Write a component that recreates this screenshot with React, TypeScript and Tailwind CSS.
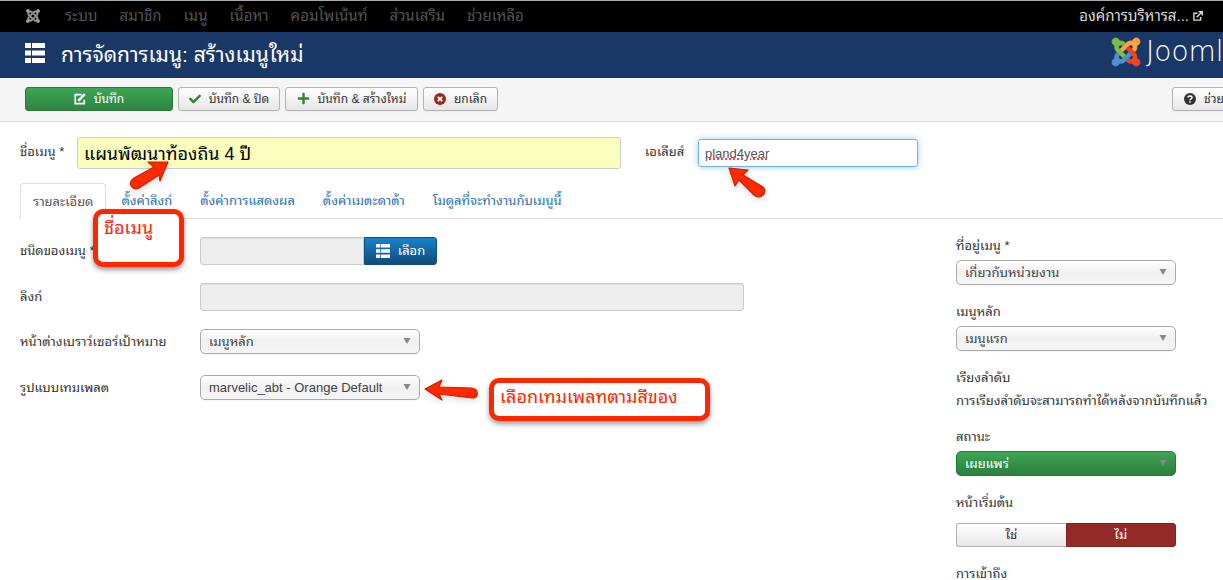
import React from "react";
import { FaCheck, FaPlus, FaJoomla } from "react-icons/fa";

const topMenu = ["ระบบ", "สมาชิก", "เมนู", "เนื้อหา", "คอมโพเน้นท์", "ส่วนเสริม", "ช่วยเหลือ"];
const tabs = ["รายละเอียด", "ตั้งค่าลิงก์", "ตั้งค่าการแสดงผล", "ตั้งค่าเมตะดาต้า", "โมดูลที่จะทำงานกับเมนูนี้"];

const plainButton =
  "flex h-6 shrink-0 items-center whitespace-nowrap rounded-[3px] border border-[#b3b3b3] bg-linear-to-b from-white to-[#e6e6e6] text-xs text-[#333] shadow-xs";
const fieldLabel = "text-[13px] leading-[18px] text-[#333]";
const disabledField =
  "h-7 min-w-0 border border-[#ccc] bg-[#eee] px-2 text-[13px] text-[#555] shadow-[inset_0_1px_1px_rgba(0,0,0,0.075)]";

function JoomlaMark() {
  return (
    <svg viewBox="0 32 448 448" className="size-7 shrink-0 overflow-visible" aria-hidden="true">
      <g strokeWidth="12" strokeLinejoin="round">
        <path fill="#7ac143" stroke="#7ac143" d="M.6 92.1C.6 58.8 27.4 32 60.4 32c30 0 54.5 21.9 59.2 50.2 32.6-7.6 67.1.6 96.5 30l-44.3 44.3c-20.5-20.5-42.6-16.3-55.4-3.5-14.3 14.3-14.3 37.9 0 52.2l99.5 99.5-44 44.3c-87.7-87.2-49.7-49.7-99.8-99.7-26.8-26.5-35-64.8-24.8-98.9C20.4 144.6.6 120.7.6 92.1z" />
        <path fill="#f9a541" stroke="#f9a541" d="M130.1 208.5l44.3 44.3c10-10 89.7-89.7 99.7-99.8 14.3-14.3 37.6-14.3 51.9 0 12.8 12.8 17 35-3.5 55.4l44 44.3c31.2-31.2 38.5-67.6 28.9-101.2 29.2-4.1 51.9-29.2 51.9-59.5 0-33.2-26.8-60.1-59.8-60.1-30.3 0-55.4 22.5-59.5 51.6-33.8-9.9-71.7-1.5-98.3 25.1-18.3 19.1-71.1 71.5-99.6 99.9z" />
        <path fill="#f44321" stroke="#f44321" d="M396.4 360.7c8.2-32.7-.9-68.5-26.3-93.9-11.8-12.2 5 4.7-99.5-99.7l-44.3 44.3 99.7 99.7c14.3 14.3 14.3 37.6 0 51.9-12.8 12.8-35 17-55.4-3.5l-44 44.3c27.6 30.2 68 38.8 102.7 28 5.5 27.4 29.7 48.1 58.9 48.1 33 0 59.8-26.8 59.8-60.1 0-30.2-22.5-55-51.6-59.1z" />
        <path fill="#5091cd" stroke="#5091cd" d="M312.1 307.6l-44-44.3c-87 86.4-50.4 50.4-99.7 99.8-14.3 14.3-37.6 14.3-51.9 0-13.1-13.4-16.9-35.3 3.2-55.4l-44-44.3c-30.2 30.2-38 65.2-29.5 98.3-26.7 6-46.2 29.9-46.2 58.2C0 453.2 26.8 480 59.8 480c28.6 0 52.5-19.8 58.6-46.7 32.7 8.2 68.5-.6 94.2-26 32.1-32 12.2-12.4 99.5-99.7z" />
        <path fill="#7ac143" d="M116 205l99.5 99.5-44 44.3-99.5-99.5z" />
      </g>
    </svg>
  );
}

function ListIcon({ className }: { className: string }) {
  return (
    <svg viewBox="0 0 20 20" className={className} fill="currentColor" aria-hidden="true">
      <path d="M0 0h6v5H0zM7 0h13v5H7zM0 7.5h6v5H0zM7 7.5h13v5H7zM0 15h6v5H0zM7 15h13v5H7z" />
    </svg>
  );
}

function EditIcon() {
  return (
    <svg viewBox="0 0 14 14" className="size-3" fill="none" stroke="currentColor" strokeWidth="2" aria-hidden="true">
      <path d="M9 2H1.5v10.5H12V8" />
      <path d="M5 9.2 12.6 1.4" strokeWidth="2.8" />
    </svg>
  );
}

function ExternalIcon() {
  return (
    <svg viewBox="0 0 10 10" className="size-[10px]" fill="none" stroke="currentColor" strokeWidth="1.4" aria-hidden="true">
      <path d="M4.5 2.2H.9v6.9h6.7V6" />
      <path d="M3.6 6.2 8.5 1.5M5.6.8h3.7v3.6" />
    </svg>
  );
}

function CancelIcon() {
  return (
    <svg viewBox="0 0 12 12" className="size-3" aria-hidden="true">
      <circle cx="6" cy="6" r="6" fill="#9d261d" />
      <path d="m3.8 3.8 4.4 4.4m0-4.4L3.8 8.2" stroke="#fff" strokeWidth="1.9" />
    </svg>
  );
}

function HelpIcon() {
  return (
    <svg viewBox="0 0 12 12" className="size-3" aria-hidden="true">
      <circle cx="6" cy="6" r="6" fill="#333" />
      <path d="M4 4.6C4 2.4 8 2.4 8 4.6 8 6 6 5.7 6 7.3M6 8.3v1.4" fill="none" stroke="#fff" strokeWidth="1.5" />
    </svg>
  );
}

function Choice({ id, value, green = false }: { id: string; value: string; green?: boolean }) {
  const tone = green
    ? "border-[#2b7a3c] bg-linear-to-b from-[#3ea554] to-[#2d7f3e] text-white"
    : "border-[#aaa] bg-linear-to-b from-white via-[#f0f0f0] to-[#f6f6f6] text-[#444]";
  return (
    <div className="relative w-[220px]">
      <select
        id={id}
        className={`block h-[25px] w-full appearance-none rounded-[5px] border pl-2 pr-6 text-[13px] shadow-xs ${tone}`}
      >
        <option>{value}</option>
      </select>
      <svg viewBox="0 0 8 6" className="pointer-events-none absolute right-[9px] top-[9px] h-[6px] w-2" aria-hidden="true">
        <path d="M.5 0h7L4 6z" fill="#888" />
      </svg>
    </div>
  );
}

function Arrow({ className, d, box }: { className: string; d: string; box: string }) {
  return (
    <svg viewBox={box} className={`pointer-events-none absolute z-10 overflow-visible drop-shadow-md ${className}`} aria-hidden="true">
      <path d={d} fill="#ff2a00" stroke="#d31c00" strokeWidth="1.2" strokeLinejoin="round" />
    </svg>
  );
}

const callout =
  "pointer-events-none absolute z-10 rounded-[10px] border-5 border-[#ff2600] bg-white px-[6px] text-[18px] leading-7 text-[#ff2600] shadow-[0_3px_5px_rgba(0,0,0,0.4)]";

export default function App() {
  return (
    <div className="overflow-x-hidden bg-white font-['Liberation_Sans','Thonburi','Noto_Sans_Thai_Looped','Loma','Garuda','Waree','Noto_Sans_Thai','Noto_Sans',sans-serif] text-[13px] leading-[18px] text-[#333]">
      <nav className="flex h-8 items-center border-t border-[#aaa] bg-black pb-px pl-[25px] pr-5 text-[15px] text-[#555]">
        <FaJoomla className="mr-6 size-4 text-[#999]" aria-label="Joomla" />
        <div className="flex gap-[22px]">
          {topMenu.map((item) => (
            <a key={item} href="#" className="whitespace-nowrap">{item}</a>
          ))}
        </div>
        <a href="#" className="ml-auto flex items-center gap-1 whitespace-nowrap text-[#d9d9d9]">
          องค์การบริหารส... <ExternalIcon />
        </a>
      </nav>

      <header className="flex h-[46px] items-center bg-[#1a3867] pl-[25px] text-white">
        <ListIcon className="mb-1 size-5" />
        <h1 className="ml-4 whitespace-nowrap text-[21px]">การจัดการเมนู: สร้างเมนูใหม่</h1>
        <div className="ml-auto flex w-[111px] items-center gap-[6px] pb-[6px]">
          <JoomlaMark />
          <span className="whitespace-nowrap font-['DejaVu_Sans'] text-[28px] font-extralight leading-7">Joomla!</span>
        </div>
      </header>

      <div className="flex h-11 items-center gap-[5px] border-b border-[#ddd] bg-[#f5f5f5] pb-[2px] pl-[25px]">
        <button className="flex h-6 w-[148px] items-center justify-center gap-2 rounded-[3px] border border-[#2b7a3c] bg-linear-to-b from-[#3ea554] to-[#2d8540] text-xs text-white">
          <EditIcon /> บันทึก
        </button>
        <button className={`${plainButton} w-[102px] justify-center gap-2`}>
          <FaCheck className="size-3 text-[#378137]" /> บันทึก &amp; ปิด
        </button>
        <button className={`${plainButton} w-[133px] justify-center gap-2`}>
          <FaPlus className="size-[13px] text-[#378137]" /> บันทึก &amp; สร้างใหม่
        </button>
        <button className={`${plainButton} w-[75px] justify-center gap-2`}>
          <CancelIcon /> ยกเลิก
        </button>
        <div className="ml-auto w-[51px]">
          <button className={`${plainButton} gap-2 px-[11px]`}>
            <HelpIcon /> ช่วยเหลือ
          </button>
        </div>
      </div>

      <main className="pl-5">
        <div className="flex items-center pt-[15px]">
          <label htmlFor="title" className={`${fieldLabel} w-[57px] shrink-0 whitespace-nowrap pb-[2px]`}>ชื่อเมนู *</label>
          <div className="relative w-[544px]">
            <input
              id="title"
              defaultValue="แผนพัฒนาท้องถิน 4 ปี"
              className="block h-8 w-full rounded-[3px] border border-[#ccc] bg-[#faffbd] px-[6px] pb-[2px] text-lg text-black"
            />
            <Arrow
              className="left-[52px] top-6 h-[30px] w-10"
              box="0 0 40 30"
              d="M39 1 19 1l6 5L5 17C-2 22 3 30 10 27l20-13 1 6z"
            />
          </div>
          <label htmlFor="alias" className={`${fieldLabel} ml-6 w-[53px] shrink-0 pb-[2px]`}>เอเลียส์</label>
          <div className="relative w-[220px]">
            <input
              id="alias"
              defaultValue="pland4year"
              className="block h-7 w-full rounded-[3px] border border-[#6bb5ec] px-[6px] text-[13px] text-[#555] underline decoration-[#ee4444] decoration-dotted decoration-2 shadow-[0_0_6px_rgba(82,168,236,0.6)]"
            />
            <Arrow
              className="left-[30px] top-[28px] h-[32px] w-[38px]"
              box="0 0 38 32"
              d="M1 1 7 19l4-6 15 15c7 6 14-3 9-8L15 8l5-5z"
            />
          </div>
        </div>

        <div role="tablist" className="relative mt-[14px] flex h-9 border-b border-[#ddd]">
          {tabs.map((tab, i) => (
            <button
              key={tab}
              role="tab"
              aria-selected={i === 0}
              className={
                i === 0
                  ? "-mb-px mr-[2px] whitespace-nowrap rounded-t-[4px] border border-b-0 border-[#ddd] bg-white px-3 text-[13px] text-[#555]"
                  : "mr-[2px] whitespace-nowrap px-[13px] text-[13px] text-[#2a6fa8]"
              }
            >
              {tab}
            </button>
          ))}
          <div className={`${callout} left-[73px] top-[26px] h-[58px] w-[91px]`}>ชื่อเมนู</div>
        </div>

        <div className="flex pt-[18px]">
          <section className="relative flex grow flex-col gap-[18px]">
            <div className="flex items-center">
              <label htmlFor="type" className={`${fieldLabel} w-[180px] shrink-0`}>ชนิดของเมนู *</label>
              <input id="type" disabled className={`${disabledField} w-[164px] rounded-l-[3px]`} />
              <button className="flex h-7 w-[73px] items-center justify-center gap-2 rounded-r-[3px] border border-[#0d4f86] bg-linear-to-b from-[#1384cc] to-[#134a7c] text-[13px] text-white">
                <ListIcon className="size-[14px]" /> เลือก
              </button>
            </div>
            <div className="flex items-center">
              <label htmlFor="link" className={`${fieldLabel} w-[180px] shrink-0`}>ลิงก์</label>
              <input id="link" disabled className={`${disabledField} w-[544px] rounded-[3px]`} />
            </div>
            <div className="flex h-7 items-center pb-[3px]">
              <label htmlFor="target" className={`${fieldLabel} w-[180px] shrink-0`}>หน้าต่างเบราว์เซอร์เป้าหมาย</label>
              <Choice id="target" value="เมนูหลัก" />
            </div>
            <div className="relative flex h-7 items-center pb-[3px]">
              <label htmlFor="template" className={`${fieldLabel} w-[180px] shrink-0`}>รูปแบบเทมเพลต</label>
              <Choice id="template" value="marvelic_abt - Orange Default" />
              <Arrow
                className="left-[404px] top-1 h-[24px] w-[54px]"
                box="0 0 54 24"
                d="M1 10 18 1l-3 7 33 1c7 1 7 10 0 10L15 15l3 6z"
              />
              <div className={`${callout} left-[469px] top-[3px] h-[43px] w-[221px]`}>เลือกเทมเพลทตามสีของ</div>
            </div>
          </section>

          <aside className="w-[267px] shrink-0 whitespace-nowrap">
            <div className="flex flex-col gap-[18px]">
              <div className="flex flex-col gap-[5px]">
                <label htmlFor="location" className={fieldLabel}>ที่อยู่เมนู *</label>
                <Choice id="location" value="เกี่ยวกับหน่วยงาน" />
              </div>
              <div className="flex flex-col gap-[5px]">
                <label htmlFor="parent" className={fieldLabel}>เมนูหลัก</label>
                <Choice id="parent" value="เมนูแรก" />
              </div>
              <div className="flex flex-col gap-[5px]">
                <p>เรียงลำดับ</p>
                <p>การเรียงลำดับจะสามารถทำได้หลังจากบันทึกแล้ว</p>
              </div>
              <div className="flex flex-col gap-[5px]">
                <label htmlFor="status" className={fieldLabel}>สถานะ</label>
                <Choice id="status" value="เผยแพร่" green />
              </div>
              <div className="flex flex-col gap-[11px]">
                <p id="home-label">หน้าเริ่มต้น</p>
                <div role="group" aria-labelledby="home-label" className="flex w-[220px]">
                  <button aria-pressed="false" className="h-6 flex-1 rounded-l-[3px] border border-r-0 border-[#b3b3b3] bg-linear-to-b from-white to-[#e6e6e6] text-[13px]">ใช่</button>
                  <button aria-pressed="true" className="h-6 flex-1 rounded-r-[3px] border border-[#802020] bg-[#942a28] text-[13px] text-white">ไม่</button>
                </div>
              </div>
              <p>การเข้าถึง</p>
            </div>
          </aside>
        </div>
      </main>
    </div>
  );
}
